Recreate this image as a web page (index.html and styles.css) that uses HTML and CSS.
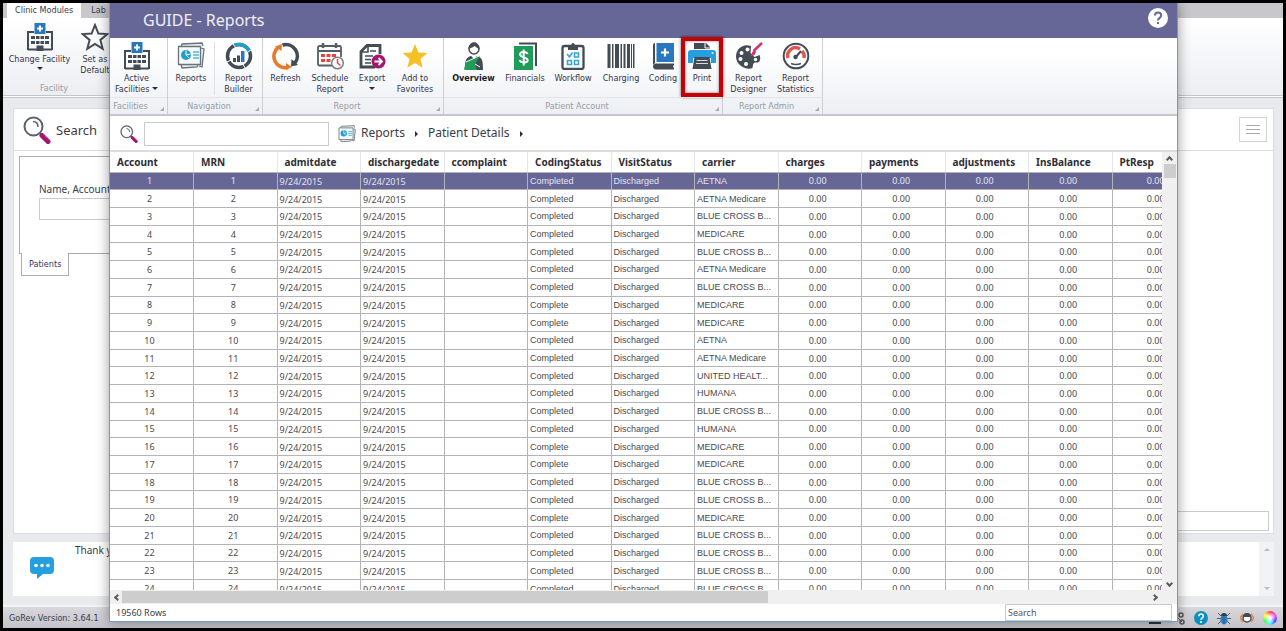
FILE: index.html
```
<!DOCTYPE html>
<html lang="en">

<head>
	<meta charset="UTF-8">
	<title>GUIDE - Reports</title>
	<link rel="stylesheet" href="styles.css">
</head>

<body>
	<svg class="defs" aria-hidden="true">
		<symbol id="i-building" viewBox="0 0 28 28">
			<path d="M2 27V9H8M20 9h6v18M2 26.500h9M17 26.500h9" fill="none" stroke="#434b54" stroke-width="2" />
			<path d="M5 13h4v3H5zM10 13h3.500v3H10zM14.500 13H18v3h-3.500zM19 13h4v3h-4zM5 18h4v3H5zM10 18h3.500v3H10zM14.500 18H18v3h-3.500zM19 18h4v3h-4zM10.500 22.500h7V28h-7z" fill="#434b54" />
			<path d="M8.500 0h11v11h-11z" fill="#2878bd" />
			<path d="M14 2.500v6M11 5.500h6" stroke="#fff" stroke-width="2" />
		</symbol>
		<symbol id="i-star" viewBox="0 0 28 28">
			<path d="M14 2l3.400 8.500 9 .6-7 5.800 2.300 8.900-7.700-4.900-7.700 4.900 2.300-8.900-7-5.800 9-.6z" />
		</symbol>
		<symbol id="i-reports" viewBox="0 0 28 28">
			<path d="M4 5L5 2l20-1 1 3M24 6l3 1-2 18-3-1M4 22l1 4 15-1 1-2" fill="#e8ecee" stroke="#68737b" stroke-width="1.300" />
			<path d="M1.500 4.500h22v18h-22z" fill="#f6fafb" stroke="#68737b" stroke-width="1.300" />
			<circle cx="9" cy="13" r="5" fill="#1f9fd0" />
			<path d="M9 13V8.500M9 13l4.500-1M9 13l3 3" stroke="#fff" />
			<path d="M16 10h6M16 13h6M16 16h6" stroke="#54b6da" stroke-width="1.500" />
		</symbol>
		<symbol id="i-builder" viewBox="0 0 28 28">
			<circle cx="14" cy="14" r="11.500" fill="none" stroke="#434b54" stroke-width="3.500" />
			<path d="M9.500 3.400A11.500 11.500 0 0 1 24.500 9.300" fill="none" stroke="#1f9fd0" stroke-width="3.500" />
			<path d="M8 2l3 4M27 7l-5 4M2 20l4-2M20 26l-2-4" stroke="#fff" />
			<path d="M8 16h3v4H8zM12 13.500h3V20h-3z" fill="#434b54" />
			<path d="M16 9h3.500v11H16z" fill="#2878bd" />
		</symbol>
		<symbol id="i-refresh" viewBox="0 0 28 28">
			<path d="M16 25.500A11.500 11.500 0 0 1 6 5.500" fill="none" stroke="#e87a2c" stroke-width="3.600" />
			<path d="M3 4.500L10 2l-.5 7zM14 21l6 4-6 3z" fill="#e87a2c" />
			<path d="M10.500 3A11.500 11.500 0 0 1 23 21" fill="none" stroke="#434b54" stroke-width="3.600" />
			<path d="M19.500 17l6.500 6-7 1.500z" fill="#434b54" />
		</symbol>
		<symbol id="i-schedule" viewBox="0 0 28 28">
			<path d="M20 23.500H3.500q-1.500 0-1.500-1.500V5.500Q2 4 3.500 4h20Q25 4 25 5.500V15M2 9h23" fill="none" stroke="#555e66" stroke-width="1.800" />
			<path d="M7 1v5M20 1v5" stroke="#555e66" stroke-width="2.500" />
			<path d="M5 12h4v3H5zM10.500 12h4v3h-4zM16 12h4v3h-4zM5 17h4v3H5zM10.500 17h4v3h-4z" fill="#dd4a3c" />
			<circle cx="21.500" cy="21" r="5.800" fill="#fff" stroke="#7a828a" stroke-width="1.500" />
			<path d="M21.500 17v4l3 2.500" fill="none" stroke="#dd4a3c" stroke-width="1.500" />
		</symbol>
		<symbol id="i-export" viewBox="0 0 28 28">
			<path d="M22 12V3.500H9l-6 6V25h14" fill="none" stroke="#434b54" stroke-width="2.800" />
			<path d="M10 3v7H3M12 9h6M7 14h8M7 17.500h6M7 21h6" fill="none" stroke="#434b54" stroke-width="1.600" />
			<circle cx="20.500" cy="19.500" r="7" fill="#a3156f" />
			<path d="M16.500 19.500h7M20.500 16l3.500 3.500-3.500 3.500" fill="none" stroke="#fff" stroke-width="1.800" />
		</symbol>
		<symbol id="i-overview" viewBox="0 0 28 28">
			<circle cx="14" cy="7" r="5" fill="#fff" stroke="#434b54" stroke-width="1.500" />
			<path d="M8.500 7c0-9 11-9 11 0-3-1-4-2.500-5-3-1.500 1.500-4 2-6 3z" fill="#434b54" />
			<path d="M5 28c0-10 1-12.500 6-14l3 2 3-2c5 1.500 6 4 6 14z" fill="#434b54" />
			<path d="M12 14.500l2 3 2-3z" fill="#fff" />
			<path d="M4 27l2-7 14-6-5 8 2 6H5z" fill="#1f9c5a" />
			<path d="M6 20l13-6M15 22l5 3" stroke="#fff" />
		</symbol>
		<symbol id="i-financials" viewBox="0 0 28 28">
			<path d="M8 1.500h17V24" fill="none" stroke="#434b54" stroke-width="2" />
			<path d="M3 4h19v24H3z" fill="#1f9c5a" />
			<path d="M16.500 12c-1-3-8-2.500-7.500.7.500 3.300 7.500 2 7.700 5.500.2 3-6.700 3.500-8-.2M12.700 7.500v16" fill="none" stroke="#fff" stroke-width="2" />
		</symbol>
		<symbol id="i-workflow" viewBox="0 0 28 28">
			<rect x="3.500" y="4" width="21" height="23" rx="2" fill="#fff" stroke="#434b54" stroke-width="2.300" />
			<path d="M9 4h3c0-4 4-4 4 0h3v4H9z" fill="#434b54" />
			<path d="M8 12l2.500 3 3-4.500M15.500 11h4v4h-4zM8.500 18.500h4v4h-4zM15.500 18.500h4v4h-4z" fill="none" stroke="#35a5d8" stroke-width="1.600" />
		</symbol>
		<symbol id="i-charging" viewBox="0 0 28 28">
			<path d="M.5 2h3v24h-3zM5 2h1.500v24H5zM8 2h4v24H8zM13.500 2H15v24h-1.500zM16.500 2h2v24h-2zM20 2h3v24h-3zM24 2h1v24h-1zM26 2h1.500v24H26z" fill="#434b54" />
		</symbol>
		<symbol id="i-coding" viewBox="0 0 28 28">
			<path d="M4 23V3q0-2 2-2v20z" fill="#434b54" />
			<path d="M7.500 1H25v19H7.500z" fill="#2878bd" />
			<path d="M16 6.500v8M12 10.500h8" stroke="#fff" stroke-width="2.200" />
			<path d="M25 21.500H7c-4 0-4 6 0 6h18v-1.500l-1-1.500 1-1.500z" fill="#434b54" />
		</symbol>
		<symbol id="i-print" viewBox="0 0 28 28">
			<path d="M6 7V1h12l4 4v2z" fill="#434b54" />
			<path d="M17 1v5h5" fill="none" stroke="#fff" />
			<path d="M3 8h22q3 0 3 3v10h-5v-5H5v5H0V11q0-3 3-3z" fill="#259fdf" />
			<path d="M6.500 15h15l2 12h-19z" fill="#434b54" />
			<path d="M8.500 18.500h11M8 21.500h12" stroke="#d8dcdf" />
			<circle cx="24.500" cy="11" r="1" fill="#fff" />
		</symbol>
		<symbol id="i-designer" viewBox="0 0 28 28">
			<path d="M16 4C8 1 1 7 1 14.500c0 8 8 13 15 12 3-.5 1-4 3-5.500 2-1.500 5 1 6-3 .5-2 0-4-.5-5l-5 2-4-4z" fill="#434b54" />
			<g fill="#fff">
				<circle cx="12.500" cy="7.500" r="2" />
				<circle cx="6.500" cy="11" r="2" />
				<circle cx="5.500" cy="17" r="2" />
				<circle cx="11" cy="22" r="2" />
				<circle cx="20.500" cy="17.500" r="1.700" />
			</g>
			<path d="M27 1L18.500 9" stroke="#cf3575" stroke-width="2.500" />
			<path d="M19.500 8l1.500 2c-1 4-4 4-6 4 2-1 1-4 4.500-6z" fill="#cf3575" />
		</symbol>
		<symbol id="i-statistics" viewBox="0 0 28 28">
			<circle cx="14" cy="14" r="12.300" fill="#fff" stroke="#434b54" stroke-width="2" />
			<path d="M6 16a8 8 0 0 1 12-9M20 9a8 8 0 0 1 2 7" fill="none" stroke="#e0584a" stroke-width="3.500" />
			<path d="M13 16l6-7" stroke="#434b54" stroke-width="2" />
			<circle cx="13.500" cy="15" r="2.200" fill="#434b54" />
			<path d="M9 21.500q5 2 10 0" fill="none" stroke="#434b54" stroke-width="1.600" />
		</symbol>
		<symbol id="i-search" viewBox="0 0 28 28">
			<circle cx="10.500" cy="10.500" r="9" fill="#fff" stroke="#59636b" stroke-width="2" />
			<path d="M10 5.500q5 0 5 5.500" fill="none" stroke="#59636b" stroke-width="1.500" />
			<path d="M16.500 17l2 2" stroke="#59636b" stroke-width="2" />
			<path d="M19 19.500l6 6" stroke="#a3156f" stroke-width="5" stroke-linecap="round" />
			<path d="M20.500 18.500l5 5" stroke="#d37ab0" stroke-dasharray="1 1" />
		</symbol>
	</svg>

	<div class="app">
		<nav class="app-tabs">
			<a class="app-tab active" href="#">Clinic Modules</a>
			<a class="app-tab" href="#">Lab</a>
		</nav>
		<div class="app-ribbon">
			<div class="app-tools">
				<button class="tool"><svg class="icon"><use href="#i-building" /></svg>Change Facility<span class="caret"></span></button>
				<button class="tool"><svg class="icon star-outline"><use href="#i-star" /></svg>Set as<br>Default</button>
			</div>
			<div class="app-group-name">Facility</div>
		</div>

		<main class="workspace">
			<section class="search-panel">
				<header class="panel-header">
					<svg class="icon"><use href="#i-search" /></svg>
					<h2>Search</h2>
					<button class="menu-button" aria-label="Menu"><i></i><i></i><i></i></button>
				</header>
				<div class="search-box">
					<label for="patientQuery">Name, Account</label>
					<input type="text" id="patientQuery">
				</div>
				<a class="patients-tab" href="#">Patients</a>
				<input class="panel-entry" type="text" aria-label="Entry">
			</section>
			<section class="message-panel">
				<svg class="chat" viewBox="0 0 24 22">
					<path d="M4 0h16q4 0 4 4v9q0 4-4 4h-7l-6 5v-5H4q-4 0-4-4V4q0-4 4-4z" fill="#259fe0" />
					<g fill="#fff">
						<circle cx="6" cy="8.500" r="1.800" />
						<circle cx="12" cy="8.500" r="1.800" />
						<circle cx="18" cy="8.500" r="1.800" />
					</g>
				</svg>
				<p>Thank you</p>
				<div class="message-scroll"><span class="tri up"></span><span class="tri down"></span></div>
			</section>
		</main>

		<footer class="statusbar">
			<span>GoRev Version: 3.64.1</span>
			<div class="status-icons">
				<svg viewBox="0 0 14 14"><path d="M1 12h12" stroke="#333" stroke-width="2" /></svg>
				<svg viewBox="0 0 14 14"><path d="M3 3l8 8" stroke="#555" /><circle cx="10" cy="4" r="2" fill="none" stroke="#555" stroke-width="1.500" /><circle cx="11" cy="11" r="2" fill="none" stroke="#555" stroke-width="1.500" /></svg>
				<svg viewBox="0 0 14 14"><circle cx="7" cy="7" r="7" fill="#0d8fbe" /><path d="M4.800 5.200c0-3 4.500-3 4.500 0C9.300 7 7 6.800 7 8.800M7 10v2" fill="none" stroke="#fff" stroke-width="1.600" /></svg>
				<svg viewBox="0 0 14 14"><path d="M1 2l3 3M13 2l-3 3M0 7.500h14M1 13l3-3M13 13l-3-3" stroke="#57616a" /><ellipse cx="7" cy="8.500" rx="3.500" ry="5" fill="#2e7cc4" /><path d="M4 5a3 3 0 0 1 6 0z" fill="#333b44" /><path d="M7 6v7" stroke="#235d94" /></svg>
				<svg viewBox="0 0 14 14"><path d="M3 3L0 7l3 4M11 3l3 4-3 4" fill="none" stroke="#df873f" stroke-width="1.500" /><circle cx="7" cy="7" r="4" fill="#fff" stroke="#434b54" stroke-width="1.500" /><path d="M3 6a4 4 0 0 1 8 0z" fill="#434b54" /></svg>
				<span class="color-wheel"></span>
			</div>
		</footer>

		<div class="dialog" role="dialog" aria-labelledby="dialogTitle">
			<header class="titlebar">
				<h1 id="dialogTitle">GUIDE - Reports</h1>
				<button class="help" aria-label="Help">
					<svg viewBox="0 0 20 20"><circle cx="10" cy="10" r="10" fill="#fff" /><path d="M7 7.500c0-4 6.200-4 6.200 0 0 2.500-3.200 2.300-3.200 5M10 14v2" fill="none" stroke="#666797" stroke-width="2" /></svg>
				</button>
			</header>

			<div class="ribbon">
				<section class="group facilities">
					<div class="tools">
						<button class="tool"><svg class="icon"><use href="#i-building" /></svg>Active<br>Facilities <span class="caret"></span></button>
					</div>
					<div class="group-name">Facilities</div>
				</section>
				<section class="group navigation">
					<div class="tools">
						<button class="tool"><svg class="icon"><use href="#i-reports" /></svg>Reports</button>
						<button class="tool divided"><svg class="icon"><use href="#i-builder" /></svg>Report<br>Builder</button>
					</div>
					<div class="group-name">Navigation</div>
				</section>
				<section class="group report">
					<div class="tools">
						<button class="tool"><svg class="icon"><use href="#i-refresh" /></svg>Refresh</button>
						<button class="tool"><svg class="icon"><use href="#i-schedule" /></svg>Schedule<br>Report</button>
						<button class="tool"><svg class="icon"><use href="#i-export" /></svg>Export<br><span class="caret"></span></button>
						<button class="tool"><svg class="icon star-gold"><use href="#i-star" /></svg>Add to<br>Favorites</button>
					</div>
					<div class="group-name">Report</div>
				</section>
				<section class="group account">
					<div class="tools">
						<button class="tool current"><svg class="icon"><use href="#i-overview" /></svg>Overview</button>
						<button class="tool"><svg class="icon"><use href="#i-financials" /></svg>Financials</button>
						<button class="tool"><svg class="icon"><use href="#i-workflow" /></svg>Workflow</button>
						<button class="tool"><svg class="icon"><use href="#i-charging" /></svg>Charging</button>
						<button class="tool"><svg class="icon"><use href="#i-coding" /></svg>Coding</button>
						<button class="tool marked"><svg class="icon"><use href="#i-print" /></svg>Print</button>
					</div>
					<div class="group-name">Patient Account</div>
				</section>
				<section class="group admin">
					<div class="tools">
						<button class="tool"><svg class="icon"><use href="#i-designer" /></svg>Report<br>Designer</button>
						<button class="tool"><svg class="icon"><use href="#i-statistics" /></svg>Report<br>Statistics</button>
					</div>
					<div class="group-name">Report Admin</div>
				</section>
			</div>

			<div class="pathbar">
				<label for="reportSearch" aria-label="Search reports"><svg class="icon-small"><use href="#i-search" /></svg></label>
				<input type="text" id="reportSearch">
				<svg class="icon-small"><use href="#i-reports" /></svg>
				<a href="#">Reports</a><span class="arrow"></span>
				<a href="#">Patient Details</a><span class="arrow"></span>
			</div>

			<div class="grid">
				<div class="grid-view">
					<table class="records">
						<thead>
							<tr>
								<th>Account</th>
								<th>MRN</th>
								<th>admitdate</th>
								<th>dischargedate</th>
								<th>ccomplaint</th>
								<th>CodingStatus</th>
								<th>VisitStatus</th>
								<th>carrier</th>
								<th>charges</th>
								<th>payments</th>
								<th>adjustments</th>
								<th>InsBalance</th>
								<th>PtResp</th>
							</tr>
						</thead>
						<tbody id="recordRows"></tbody>
					</table>
				</div>
				<div class="vscroll">
					<span class="chevron up"></span>
					<span class="vthumb"></span>
					<span class="chevron down"></span>
				</div>
				<div class="hscroll">
					<span class="chevron left"></span>
					<span class="hthumb"></span>
					<span class="chevron right"></span>
				</div>
			</div>

			<footer class="dialog-footer">
				<span>19560 Rows</span>
				<input type="search" placeholder="Search" aria-label="Search rows">
			</footer>
		</div>
	</div>

	<script src="script.js"></script>
</body>

</html>
```
FILE: styles.css
```
* {
	box-sizing: border-box;
}

body {
	margin: 0;
	height: 100vh;
	padding: 3px;
	background: #000;
	color: #3c3c46;
	font-family: "Noto Sans", sans-serif;
	font-size: 10px;
	overflow: hidden;
}

button,
input {
	font: inherit;
	color: inherit;
	border-radius: 0;
}

button {
	border: 0;
	padding: 0;
	background: none;
}

input {
	border: 1px solid #c8cbcd;
	background: #fff;
}

a {
	color: inherit;
	text-decoration: none;
}

h1,
h2,
p {
	margin: 0;
	font-weight: normal;
}

.defs {
	position: absolute;
	width: 0;
	height: 0;
}

.icon {
	display: block;
	width: 28px;
	height: 28px;
	margin: 0 auto 3px;
}

.icon-small {
	display: block;
	width: 18px;
	height: 18px;
}

/* main window */
.app {
	position: relative;
	display: flex;
	flex-direction: column;
	height: 100%;
	background: #e9eaed;
}

.app-tabs {
	display: flex;
	height: 15px;
	padding-left: 4px;
	background: #c7c7cc;
	font: 9px/15px "DejaVu Sans Condensed", "DejaVu Sans", sans-serif;
}

.app-tab {
	padding: 0 10px;
}

.app-tab.active {
	padding: 0 8px;
	background: #fff;
}

.app-ribbon {
	height: 80px;
	padding-top: 5px;
	background: linear-gradient(#fff, #eceef2);
	border-bottom: 3px double #c4c5ca;
}

.app-tools {
	display: grid;
	grid-template-columns: 73px 38px;
	height: 57px;
}

.tool {
	display: block;
	align-self: start;
	font: 9px/11px "DejaVu Sans Condensed", "DejaVu Sans", sans-serif;
	color: #35354a;
	white-space: nowrap;
	text-align: center;
}

.caret {
	display: inline-block;
	border: 3px solid transparent;
	border-top-color: #2c2c38;
	border-bottom: 0;
	vertical-align: 2px;
}

.app-tools .caret {
	display: block;
	width: 0;
	margin: 2px auto;
}

.star-outline {
	fill: none;
	stroke: #434b54;
	stroke-width: 2;
}

.star-gold {
	fill: #f6c026;
}

.app-group-name,
.group-name {
	font: 9px/16px "DejaVu Sans Condensed", "DejaVu Sans", sans-serif;
	color: #9a9aa4;
}

.app-group-name {
	padding-left: 37px;
}

.workspace {
	flex: 1;
	display: flex;
	flex-direction: column;
	gap: 8px;
	padding: 10px 9px 9px 10px;
}

.search-panel {
	flex: 1;
	display: flex;
	flex-direction: column;
	background: #fff;
	border: 1px solid #dcdde0;
}

.panel-header {
	display: flex;
	align-items: center;
	gap: 5px;
	height: 42px;
	padding: 0 6px 0 9px;
	border-bottom: 1px solid #dcdde0;
}

.panel-header .icon {
	margin: 0;
}

.panel-header h2 {
	font-size: 13px;
}

.menu-button {
	display: flex;
	flex-direction: column;
	justify-content: center;
	gap: 3px;
	width: 28px;
	height: 25px;
	margin-left: auto;
	padding: 0 6px;
	border: 1px solid #d4d5d8;
}

.menu-button i {
	height: 1px;
	background: #a9abae;
}

.search-box {
	width: 50%;
	height: 98px;
	margin: 5px 0 0 5px;
	padding: 25px 19px;
	border: 1px solid #a9acb2;
	border-right: 0;
}

.search-box label {
	display: block;
	line-height: 14px;
}

.search-box input {
	width: 200px;
	height: 22px;
	margin-top: 2px;
}

.patients-tab {
	align-self: flex-start;
	margin: -1px 0 0 7px;
	padding: 0 7px;
	border: 1px solid #a9acb2;
	border-top: 0;
	background: #fff;
	font: 9px/22px "DejaVu Sans Condensed", "DejaVu Sans", sans-serif;
	color: #35356a;
}

.panel-entry {
	width: 50%;
	height: 20px;
	margin: auto 4px 2px auto;
}

.message-panel {
	display: flex;
	height: 54px;
	background: #fff;
}

.message-panel .chat {
	width: 24px;
	height: 22px;
	margin: 15px 21px 0 17px;
}

.message-panel p {
	line-height: 16px;
}

.message-scroll {
	display: flex;
	flex-direction: column;
	justify-content: space-between;
	align-items: center;
	width: 15px;
	margin-left: auto;
	padding: 6px 0;
	background: #f3f3f5;
}

.tri {
	border: 3px solid transparent;
}

.tri.up {
	border-top: 0;
	border-bottom-color: #bbb;
}

.tri.down {
	border-bottom: 0;
	border-top-color: #bbb;
}

.statusbar {
	display: flex;
	align-items: center;
	justify-content: space-between;
	height: 23px;
	padding: 1px 6px 0;
	border-top: 2px solid #f4f4f6;
	background: linear-gradient(#d8d8dd, #c2c2c8);
	font: 9px/16px "DejaVu Sans Condensed", "DejaVu Sans", sans-serif;
}

.status-icons {
	display: flex;
	gap: 9px;
}

.status-icons svg,
.color-wheel {
	width: 14px;
	height: 14px;
}

.color-wheel {
	border-radius: 50%;
	background: radial-gradient(#fff 10%, transparent 60%), conic-gradient(#f44, #f4f, #44f, #4ff, #4f4, #ff4, #f44);
}

/* report window */
.dialog {
	position: absolute;
	inset: 0 105px 6px 106px;
	display: flex;
	flex-direction: column;
	border: 1px solid #6d9cc4;
	border-top: 0;
	background: #fff;
	box-shadow: 0 0 12px rgba(0, 0, 0, 0.4);
}

.titlebar {
	display: flex;
	align-items: center;
	justify-content: space-between;
	height: 35px;
	padding: 0 9px 2px 33px;
	background: #666797;
	color: #f0f0f6;
}

.titlebar h1 {
	font-size: 16px;
}

.help {
	width: 20px;
	height: 20px;
	margin-bottom: 4px;
}

.help svg {
	display: block;
}

.ribbon {
	display: flex;
	height: 78px;
	background: linear-gradient(#fff 20%, #eceff3);
	border-bottom: 2px solid #c3c6cb;
}

.group {
	display: flex;
	flex-direction: column;
	border-right: 1px solid #cdcfd4;
}

.tools {
	display: grid;
	height: 61px;
	padding: 4px 5px 0 0;
}

.facilities .tools {
	grid-template-columns: 53px;
	padding-right: 4px;
}

.navigation .tools {
	grid-template-columns: 46px 48px;
	padding-right: 0;
}

.report .tools {
	grid-template-columns: 45px 44px 40px 46px;
}

.account .tools {
	grid-template-columns: 59px 44px 52px 44px 40px 38px;
	padding-right: 1px;
}

.admin .tools {
	grid-template-columns: 51px 43px;
}

.divided {
	border-left: 1px solid #dfe1e5;
}

.current {
	font-weight: bold;
	color: #1c1c26;
}

.marked {
	position: relative;
}

.marked::after {
	content: "";
	position: absolute;
	inset: -5px -2px -13px;
	border: 4px solid #c40008;
	box-shadow: 0 0 3px rgba(0, 0, 0, 0.6), inset 0 0 3px rgba(0, 0, 0, 0.5);
}

.group-name {
	position: relative;
	border-top: 1px solid #e4e6ea;
	padding-right: 12px;
	text-align: center;
}

.facilities .group-name {
	padding-right: 16px;
}

.group-name::after {
	content: "";
	position: absolute;
	right: 3px;
	bottom: 3px;
	border: 2px solid #a9abb2;
	border-top-color: transparent;
	border-left-color: transparent;
}

.pathbar {
	display: flex;
	align-items: center;
	height: 34px;
	padding: 1px 10px 0;
	font-size: 12px;
}

.pathbar input {
	width: 185px;
	height: 24px;
	margin: 0 9px 0 6px;
}

.pathbar a {
	margin-left: 5px;
	line-height: 16px;
	padding-bottom: 1px;
}

.arrow {
	margin: 0 5px 0 10px;
	border: 3px solid transparent;
	border-left-color: #2c2c38;
	border-right: 0;
}

.grid {
	flex: 1;
	display: grid;
	grid-template-columns: minmax(0, 1fr) 15px;
	grid-template-rows: minmax(0, 1fr) 14px;
	min-height: 0;
	border-top: 2px solid #dcdcdf;
}

.grid-view {
	overflow: hidden;
}

.records {
	width: 1086px;
	height: 446px;
	table-layout: fixed;
	border-collapse: collapse;
	font-size: 9px;
	line-height: 13px;
	color: #4a4a4e;
}

.records th {
	height: 20px;
	padding: 1px 0 0 7px;
	border-right: 1px solid #e6e6e8;
	border-bottom: 1px solid #b4b4b8;
	font-size: 10px;
	text-align: left;
	color: #2e2e33;
}

.records td {
	padding: 1px 2px 0;
	border-right: 1px solid #b4b4b6;
	border-bottom: 1px solid #b4b4b6;
	overflow: hidden;
	white-space: nowrap;
}

.records .number {
	padding: 0 4px 0 0;
	text-align: center;
}

.records .number:last-child {
	padding: 0 0 0 4px;
}

.records .text {
	font-family: "Liberation Sans", Arial, sans-serif;
}

.records .selected {
	background: #666797;
	color: #e4e4f0;
}

.vscroll {
	display: flex;
	flex-direction: column;
	align-items: center;
	padding: 5px 0 4px;
	background: #f0f0f0;
}

.vthumb {
	width: 12px;
	height: 14px;
	margin-top: 2px;
	background: #cdcdcd;
}

.hscroll {
	grid-column: 1 / 3;
	display: flex;
	align-items: center;
	padding: 0 20px 0 5px;
	background: #f0f0f0;
}

.hthumb {
	width: 62%;
	height: 12px;
	margin-left: 2px;
	background: #cdcdcd;
}

.chevron {
	width: 5px;
	height: 5px;
	border: 2px solid #5c5c5c;
	border-width: 2px 2px 0 0;
}

.chevron.up {
	transform: rotate(-45deg);
}

.chevron.down {
	margin-top: auto;
	transform: rotate(135deg);
}

.chevron.left {
	transform: rotate(-135deg);
}

.chevron.right {
	margin-left: auto;
	transform: rotate(45deg);
}

.dialog-footer {
	display: flex;
	align-items: center;
	justify-content: space-between;
	height: 17px;
	padding: 0 5px 0 6px;
	font-size: 9px;
}

.dialog-footer input {
	width: 167px;
	height: 17px;
	padding: 0 2px;
}

.dialog-footer input::placeholder {
	color: #55555c;
}
```
FILE: script.js
```
const carriers = [
	"AETNA", "AETNA Medicare", "BLUE CROSS B...", "MEDICARE", "BLUE CROSS B...", "AETNA Medicare",
	"BLUE CROSS B...", "MEDICARE", "MEDICARE", "AETNA", "AETNA Medicare", "UNITED HEALT...",
	"HUMANA", "BLUE CROSS B...", "HUMANA", "MEDICARE", "MEDICARE", "BLUE CROSS B...",
	"BLUE CROSS B...", "MEDICARE", "BLUE CROSS B...", "BLUE CROSS B...", "BLUE CROSS B...", "BLUE CROSS B..."
];
const completeRows = [8, 9, 16, 17, 20];
const tableBody = document.getElementById("recordRows");

carriers.forEach(function (carrier, index) {
	const id = index + 1;
	const status = completeRows.includes(id) ? "Complete" : "Completed";
	const row = document.createElement("tr");
	if (id === 1) {
		row.className = "selected";
	}
	row.innerHTML = `
		<td class="number">${id}</td>
		<td class="number">${id}</td>
		<td>9/24/2015</td>
		<td>9/24/2015</td>
		<td></td>
		<td class="text">${status}</td>
		<td class="text">Discharged</td>
		<td class="text">${carrier}</td>
		${'<td class="number">0.00</td>'.repeat(5)}
	`;
	tableBody.appendChild(row);
});
```
